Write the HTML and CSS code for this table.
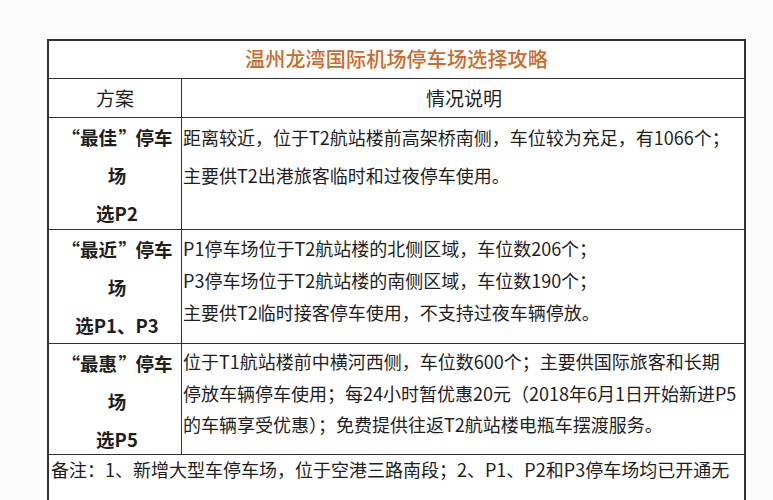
FILE: index.html
```html
<!DOCTYPE html>
<html lang="zh-CN">
<head>
<meta charset="utf-8">
<title>温州龙湾国际机场停车场选择攻略</title>
<link rel="stylesheet" href="styles.css">
</head>
<body>
<div class="sheet">
  <div class="title">温州龙湾国际机场停车场选择攻略</div>
  <div class="head head-left">方案</div>
  <div class="head">情况说明</div>

  <div class="plan"><span class="ql">“</span>最佳<span class="qr">”</span>停车<br>场<br>选P2</div>
  <div class="desc desc-wide">
    <div>距离较近，位于T2航站楼前高架桥南侧，车位较为充足，有1066个；</div>
    <div>主要供T2出港旅客临时和过夜停车使用。</div>
  </div>

  <div class="plan"><span class="ql">“</span>最近<span class="qr">”</span>停车<br>场<br>选P1、P3</div>
  <div class="desc">
    <div>P1停车场位于T2航站楼的北侧区域，车位数206个；</div>
    <div>P3停车场位于T2航站楼的南侧区域，车位数190个；</div>
    <div>主要供T2临时接客停车使用，不支持过夜车辆停放。</div>
  </div>

  <div class="plan"><span class="ql">“</span>最惠<span class="qr">”</span>停车<br>场<br>选P5</div>
  <div class="desc desc-tight">
    <div>位于T1航站楼前中横河西侧，车位数600个；主要供国际旅客和长期</div>
    <div>停放车辆停车使用；每24小时暂优惠20元（2018年6月1日开始新进P5</div>
    <div>的车辆享受优惠）；免费提供往返T2航站楼电瓶车摆渡服务。</div>
  </div>

  <div class="note">
    <div class="note-text">备注：1、新增大型车停车场，位于空港三路南段；2、P1、P2和P3停车场均已开通无</div>
  </div>
</div>
</body>
</html>
```

FILE: styles.css
```css
html, body {
  margin: 0;
  padding: 0;
  background: #fcfcfc;
  height: 500px;
  overflow: hidden;
}

body {
  font-family: "Noto Sans CJK SC", "Noto Sans", sans-serif;
  color: #1e1e1e;
}

.sheet {
  margin: 39px 0 0 47px;
  width: 695px;
  border: 2px solid #333;
  border-bottom: none;
  background: #fff;
  display: grid;
  grid-template-columns: 133px 1fr;
  grid-template-rows: 38px 39px 112px 114px 111px 60px;
}

.title {
  grid-column: 1 / 3;
  border-bottom: 1px solid #333;
  text-align: center;
  font-size: 20px;
  line-height: 36px;
  color: #cc6a2c;
  letter-spacing: 0.2px;
  font-weight: 500;
}

.head {
  border-bottom: 1px solid #333;
  text-align: center;
  font-size: 19px;
  line-height: 38px;
  padding-left: 2px;
}

.head-left {
  border-right: 1px solid #333;
  padding-left: 0;
}

.plan {
  border-right: 1px solid #333;
  border-bottom: 1px solid #333;
  text-align: center;
  font-size: 18.5px;
  font-weight: bold;
  line-height: 38px;
  padding-left: 4px;
  white-space: nowrap;
}

.ql,
.qr {
  display: inline-block;
  width: 1em;
}

.ql {
  text-align: right;
  padding-right: 0.08em;
  box-sizing: border-box;
}

.qr {
  text-align: left;
  padding-left: 0.08em;
  box-sizing: border-box;
}

.desc {
  border-bottom: 1px solid #333;
  font-size: 18px;
  line-height: 32px;
  padding: 2px 0 0 1px;
  white-space: nowrap;
  overflow: hidden;
}

.desc-wide {
  line-height: 38px;
  padding-top: 0;
}

.desc-tight {
  line-height: 31.5px;
}

.note {
  grid-column: 1 / 3;
  font-size: 18px;
  padding-left: 2px;
  overflow: hidden;
}

.note-text {
  line-height: 28px;
  white-space: nowrap;
}
```
